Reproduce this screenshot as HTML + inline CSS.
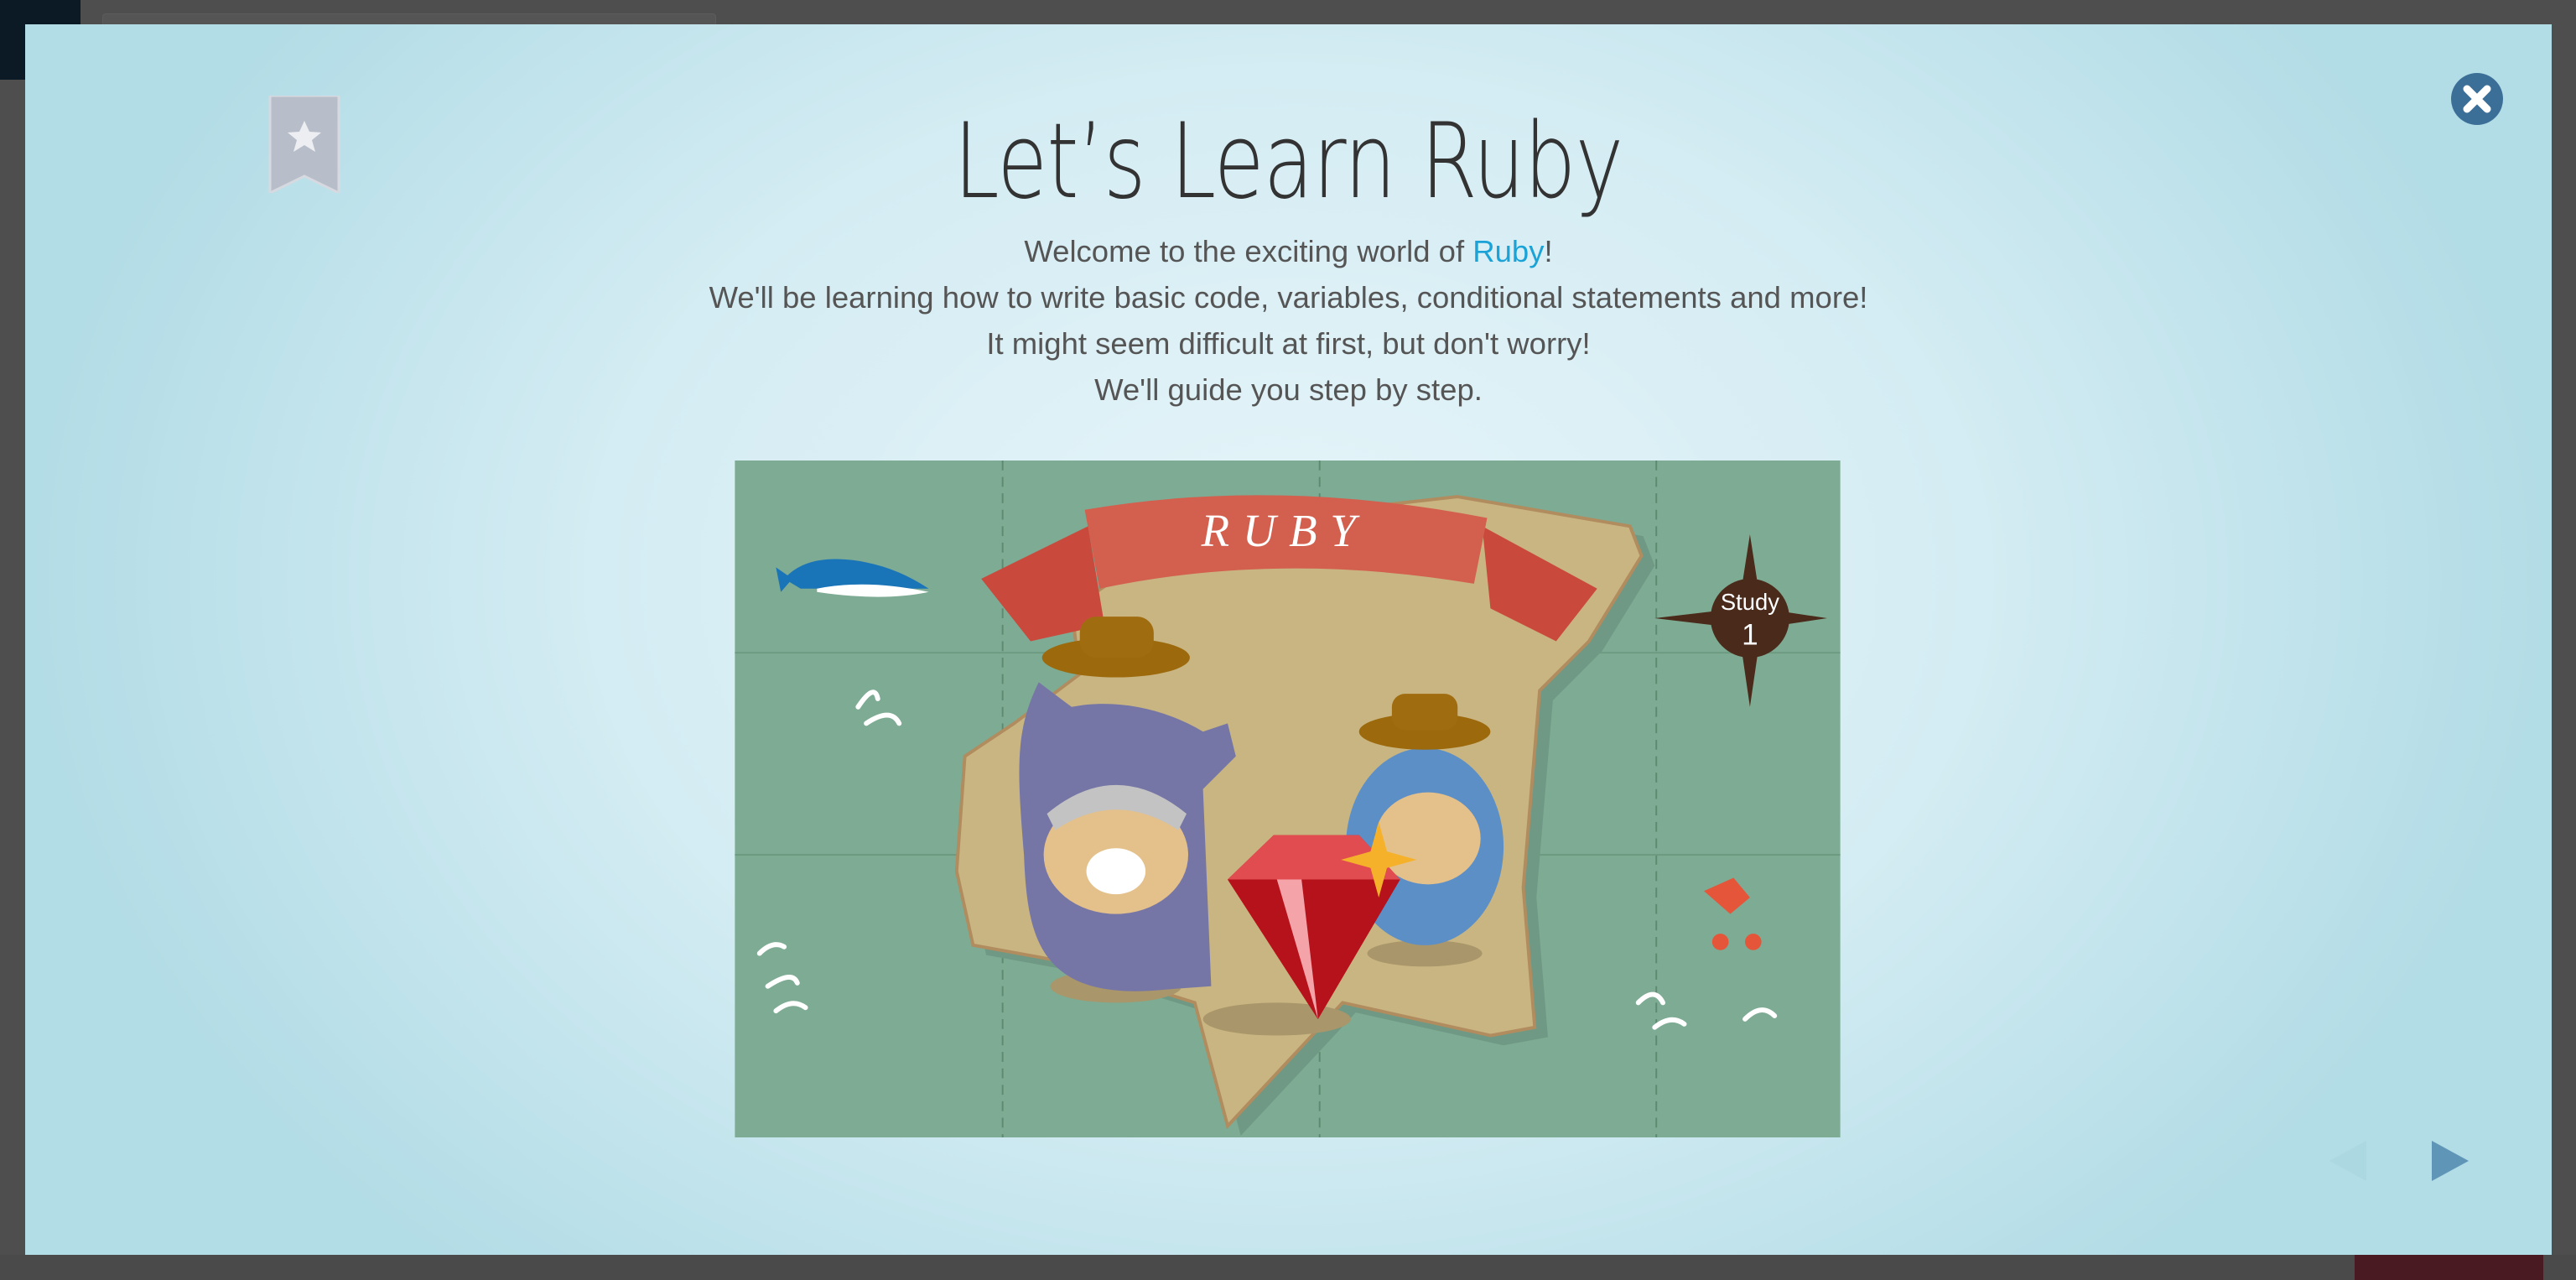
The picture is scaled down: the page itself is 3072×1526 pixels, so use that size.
<!DOCTYPE html>
<html><head><meta charset="utf-8"><style>
html,body{margin:0;padding:0;width:3072px;height:1526px;overflow:hidden;background:#4e4e4e;font-family:"Liberation Sans",sans-serif}
.topnav{position:absolute;left:0;top:0;width:96px;height:95px;background:#0b1a24}
.search{position:absolute;left:122px;top:16px;width:730px;height:14px;background:#555;border:1px solid #5c5c5c;border-radius:4px}
.modal{position:absolute;left:30px;top:29px;width:3013px;height:1467px;background:radial-gradient(ellipse 50% 75% at 50% 45%,#e6f5f9 0%,#d4ecf3 55%,#b2dce6 100%)}
h1{position:absolute;left:0;width:100%;top:92px;margin:0;text-align:center;font-size:124px;color:#333;letter-spacing:-1px;font-family:"DejaVu Sans","Liberation Sans",sans-serif;font-weight:200;transform:scaleX(0.785);transform-origin:50% 0}
.txt{position:absolute;left:0;width:100%;top:243px;text-align:center;font-size:36.5px;line-height:55px;color:#555;font-family:"Liberation Sans",sans-serif}
.txt a{color:#1ba3d7;text-decoration:none}
.contact{position:absolute;left:2808px;top:1460px;width:225px;height:66px;background:#4a1a22}
.bar{position:absolute;left:0;top:1496px;width:3072px;height:30px;background:#4a4a4a}
</style></head><body>
<div class="topnav"></div>
<div class="search"></div>
<div class="bar"></div>
<div class="contact"></div>
<div class="modal">
 <svg style="position:absolute;left:290px;top:85px" width="86" height="116" viewBox="0 0 86 116">
  <path d="M2 0H84V116L43 96L2 116Z" fill="#b8bec9" stroke="#d6dae0" stroke-width="3"/>
  <path d="M43 30l6 13 14 1-11 9 4 14-13-8-13 8 4-14-11-9 14-1z" fill="#eceef2"/>
 </svg>
 <svg style="position:absolute;left:2892px;top:57px" width="64" height="64" viewBox="0 0 64 64">
  <circle cx="32" cy="32" r="31" fill="#3c6f98"/>
  <path d="M20 20L44 44M44 20L20 44" stroke="#fff" stroke-width="9" stroke-linecap="round"/>
 </svg>
 <h1>Let’s Learn Ruby</h1>
 <div class="txt">Welcome to the exciting world of <a>Ruby</a>!<br>We'll be learning how to write basic code, variables, conditional statements and more!<br>It might seem difficult at first, but don't worry!<br>We'll guide you step by step.</div>
 <svg style="position:absolute;left:846px;top:520px" width="1319" height="807" viewBox="0 0 673 412">
  <rect width="673" height="412" fill="#7eab93"/>
  <g stroke="#5f8a72" stroke-width="1" stroke-dasharray="6 4"><path d="M163 0V412M356 0V412M561 0V412"/></g>
  <path d="M0 117H673M0 240H673" stroke="#6c9a81" stroke-width="1"/>
  <path d="M205 90L280 40L440 22L545 40L552 58L520 110L490 140L480 260L487 345L460 350L370 330L300 405L280 330L200 305L145 295L135 250L140 180L170 160L210 130Z" fill="#6f9984" transform="translate(8,6)"/>
  <path d="M205 90L280 40L440 22L545 40L552 58L520 110L490 140L480 260L487 345L460 350L370 330L300 405L280 330L200 305L145 295L135 250L140 180L170 160L210 130Z" fill="#c9b581" stroke="#b08c5f" stroke-width="2"/>
  <path d="M150 72L215 40L225 100L180 110Z" fill="#c94a3d"/>
  <path d="M455 40L525 78L500 110L460 90Z" fill="#c94a3d"/>
  <path d="M213 30Q330 10 458 35L450 75Q330 55 222 78Z" fill="#d35f4f"/>
  <text x="335" y="52" text-anchor="middle" fill="#fff" font-family="Liberation Serif,serif" font-style="italic" font-size="28" letter-spacing="8">RUBY</text>
  <path d="M30 72Q45 55 80 62Q100 66 118 78L40 78Z" fill="#1a74b8"/><path d="M25 65L35 72L28 80Z" fill="#1a74b8"/>
  <path d="M50 78Q80 72 118 80Q90 86 50 80Z" fill="#fff"/>
  <g fill="none" stroke="#fff" stroke-width="3" stroke-linecap="round">
   <path d="M75 150q10-15 12-5M80 160q15-10 20 0M15 300q8-8 15-4M20 320q15-10 18-2M25 335q10-8 18-2M550 330q10-10 15 0M560 345q10-8 18-2M615 340q10-10 18-2"/>
  </g>
  <path d="M618 45L625 90L665 96L625 102L618 150L611 102L560 96L611 90Z" fill="#4a2a1a"/>
  <circle cx="618" cy="96" r="24" fill="#4a2a1a"/>
  <text x="618" y="91" text-anchor="middle" fill="#fff" font-size="14">Study</text>
  <text x="618" y="112" text-anchor="middle" fill="#fff" font-size="18">1</text>
  <path d="M590 262l18-8 10 12-12 10z" fill="#e5553a"/><circle cx="600" cy="293" r="5" fill="#e5553a"/><circle cx="620" cy="293" r="5" fill="#e5553a"/>
  <ellipse cx="232" cy="320" rx="40" ry="10" fill="#a9966a"/>
  <ellipse cx="330" cy="340" rx="45" ry="10" fill="#a9966a"/>
  <ellipse cx="420" cy="300" rx="35" ry="8" fill="#a9966a"/>
  <path d="M262 322C185 330 178 290 176 240C172 190 170 165 185 135L205 150C230 145 260 150 285 165L300 160L305 180L285 200L290 320Z" fill="#7676a6"/>
  <ellipse cx="232" cy="240" rx="44" ry="36" fill="#e4c08a"/>
  <ellipse cx="232" cy="250" rx="18" ry="14" fill="#fff"/>
  <path d="M190 215Q232 180 275 215L270 225Q232 200 195 225Z" fill="#c3c3c3"/>
  <ellipse cx="232" cy="120" rx="45" ry="12" fill="#9c6a0c"/><rect x="210" y="95" width="45" height="25" rx="10" fill="#a06c10"/>
  <ellipse cx="420" cy="235" rx="48" ry="60" fill="#5d8fc7"/>
  <ellipse cx="422" cy="230" rx="32" ry="28" fill="#e4c08a"/>
  <ellipse cx="420" cy="165" rx="40" ry="11" fill="#9c6a0c"/><rect x="400" y="142" width="40" height="22" rx="8" fill="#a06c10"/>
  <path d="M300 255L328 228L380 228L405 255L355 340Z" fill="#c81a20"/>
  <path d="M300 255L405 255L355 340Z" fill="#b5121b"/>
  <path d="M328 228L380 228L405 255L300 255Z" fill="#e04c50"/>
  <path d="M330 255L355 340L345 255Z" fill="#f4a3a8"/>
  <path d="M392 220l5 18 18 5-18 5-5 18-5-18-18-5 18-5z" fill="#f5b12a"/>
 </svg>
 <svg style="position:absolute;left:2748px;top:1331px" width="46" height="48"><path d="M44 0V48L0 24Z" fill="#a9d5e0" opacity=".6"/></svg>
 <svg style="position:absolute;left:2870px;top:1331px" width="46" height="48"><path d="M0 0V48L44 24Z" fill="#5f95b6"/></svg>
</div>
</body></html>
